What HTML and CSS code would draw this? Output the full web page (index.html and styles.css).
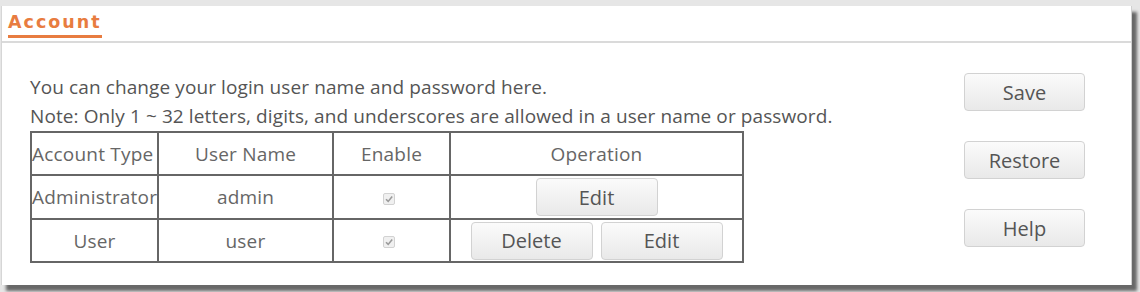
FILE: index.html
```html
<!DOCTYPE html>
<html>
<head>
<meta charset="utf-8">
<link rel="stylesheet" href="styles.css">
</head>
<body>
<div class="panel">
  <div class="panel-head">
    <span class="title">Account</span>
  </div>
  <div class="panel-body">
    <div class="main">
      <p class="line">You can change your login user name and password here.</p>
      <p class="line">Note: Only 1 ~ 32 letters, digits, and underscores are allowed in a user name or password.</p>
      <table class="grid">
        <colgroup>
          <col class="c1"><col class="c2"><col class="c3"><col class="c4">
        </colgroup>
        <tr class="r-head">
          <td class="left">Account Type</td>
          <td>User Name</td>
          <td>Enable</td>
          <td>Operation</td>
        </tr>
        <tr class="r-mid">
          <td class="left">Administrator</td>
          <td>admin</td>
          <td><span class="chk"><svg viewBox="0 0 12 12" width="12" height="12"><path d="M3 6.2 L5.2 8.4 L9.2 3.6" fill="none" stroke="#9a9a9a" stroke-width="1.6"/></svg></span></td>
          <td><div class="ops"><button class="btn">Edit</button></div></td>
        </tr>
        <tr class="r-last">
          <td>User</td>
          <td>user</td>
          <td><span class="chk"><svg viewBox="0 0 12 12" width="12" height="12"><path d="M3 6.2 L5.2 8.4 L9.2 3.6" fill="none" stroke="#9a9a9a" stroke-width="1.6"/></svg></span></td>
          <td><div class="ops"><button class="btn">Delete</button><button class="btn">Edit</button></div></td>
        </tr>
      </table>
    </div>
    <div class="side">
      <button class="btn side-btn">Save</button>
      <button class="btn side-btn">Restore</button>
      <button class="btn side-btn">Help</button>
    </div>
  </div>
</div>
</body>
</html>
```

FILE: styles.css
```css
* { box-sizing: border-box; }
html, body { margin: 0; padding: 0; }
body {
  width: 1140px;
  height: 292px;
  background: #e6e6e6;
  font-family: "Open Sans", "Noto Sans", sans-serif;
  color: #555;
  overflow: hidden;
  padding-top: 6px;
}
.panel {
  margin-left: 1px;
  width: 1131px;
  height: 279px;
  background: #fff;
  border-left: 1px solid #d6d6d6;
  border-right: 1px solid #d0d0d0;
  box-shadow: 5px 6px 3px rgba(0,0,0,0.55);
}
.panel-head {
  height: 37px;
  padding-left: 6px;
  border-bottom: 2px solid #dadada;
  display: flex;
  align-items: flex-start;
}
.title {
  display: inline-block;
  margin-top: 5px;
  font-family: "DejaVu Sans", sans-serif;
  font-weight: bold;
  font-size: 17.5px;
  letter-spacing: 2px;
  color: #e87c40;
  line-height: 22px;
  padding-bottom: 2px;
  border-bottom: 3px solid #e87c40;
}
.panel-body {
  display: flex;
  justify-content: space-between;
  padding: 30px 46px 0 28px;
}
.line {
  margin: 0;
  font-size: 19px;
  line-height: 29px;
  color: #555;
  white-space: nowrap;
  letter-spacing: 0.1px;
}
.grid {
  border-collapse: collapse;
  border: 2px solid #666;
  table-layout: fixed;
  width: 712px;
  font-size: 19px;
  color: #666;
  letter-spacing: 0.2px;
}
.c1 { width: 127px; }
.c2 { width: 175px; }
.c3 { width: 117px; }
.c4 { width: 293px; }
.grid td {
  border: 2px solid #666;
  text-align: center;
  padding: 0;
  white-space: nowrap;
  overflow: hidden;
}
.grid td.left { text-align: left; padding-left: 0; }
.r-head td { height: 43px; }
.r-mid td { height: 44px; }
.r-last td { height: 43px; }
.chk {
  display: inline-block;
  width: 12px;
  height: 12px;
  border: 1px solid #d2d2d2;
  border-radius: 2px;
  background: #f0f0f0;
  vertical-align: middle;
  margin-right: 6px;
}
.chk svg { display: block; margin: -1px; }
.ops {
  display: flex;
  justify-content: center;
  gap: 8px;
}
.btn {
  width: 122px;
  height: 38px;
  font-family: "Open Sans", "Noto Sans", sans-serif;
  font-size: 20px;
  color: #555;
  background: linear-gradient(#fbfbfb, #e9e9e9);
  border: 1px solid #d2d2d2;
  border-radius: 4px;
  padding: 0;
}
.side {
  display: flex;
  flex-direction: column;
  gap: 30px;
  padding-top: 0;
}
.side-btn { width: 121px; }
```
